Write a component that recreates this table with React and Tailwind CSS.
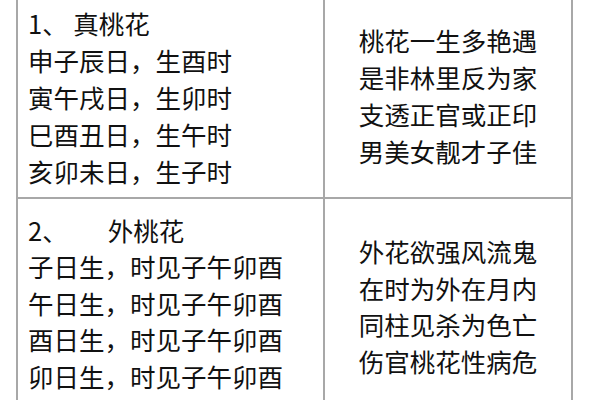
import React from 'react';

const rows = [
  {
    left: ['1、 真桃花', '申子辰日，生酉时', '寅午戌日，生卯时', '巳酉丑日，生午时', '亥卯未日，生子时'],
    right: ['桃花一生多艳遇', '是非林里反为家', '支透正官或正印', '男美女靓才子佳'],
    h: 'h-[199px]',
    lead: 'leading-[37px]',
    leftPad: 'pb-[4px]',
    rightPad: 'pb-[8px]',
  },
  {
    left: ['2、\u00a0\u00a0\u00a0\u00a0\u00a0\u00a0 外桃花', '子日生，时见子午卯酉', '午日生，时见子午卯酉', '酉日生，时见子午卯酉', '卯日生，时见子午卯酉'],
    right: ['外花欲强风流鬼', '在时为外在月内', '同柱见杀为色亡', '伤官桃花性病危'],
    h: 'h-[214px]',
    lead: 'leading-[36.5px]',
    leftPad: 'pb-[4px]',
    rightPad: 'pt-[2px]',
  },
];

export default function App() {
  return (
    <div className="w-[600px] h-[400px] overflow-hidden bg-white pl-[16px] text-[#111] text-[25.5px] font-['Noto_Sans_CJK_SC',sans-serif]">
      <div className="w-[557px] border-l-2 border-r-2 border-[#a8a8a8]">
        {rows.map((r, i) => (
          <div key={i} className={`grid grid-cols-[305px_1fr] ${r.h} border-b-2 border-[#a8a8a8]`}>
            <div className={`flex flex-col justify-center pl-[10px] ${r.leftPad} ${r.lead} whitespace-pre`}>
              {r.left.map((t) => (
                <div key={t}>{t}</div>
              ))}
            </div>
            <div className={`flex flex-col justify-center items-center border-l-2 border-[#a8a8a8] ${r.rightPad} ${r.lead}`}>
              {r.right.map((t) => (
                <div key={t}>{t}</div>
              ))}
            </div>
          </div>
        ))}
      </div>
    </div>
  );
}
